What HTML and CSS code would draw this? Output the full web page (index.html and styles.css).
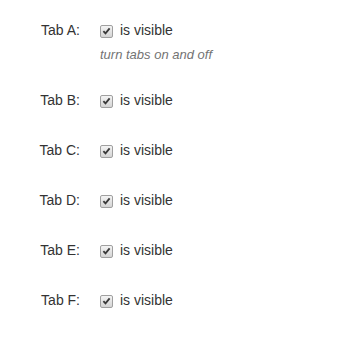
FILE: index.html
```html
<!DOCTYPE html>
<html>
<head>
<meta charset="utf-8">
<link rel="stylesheet" href="styles.css">
</head>
<body>
<form class="form">
  <div class="row">
    <div class="label">Tab A:</div>
    <div class="control">
      <label class="check"><span class="box"><svg viewBox="0 0 12 12" width="12" height="12"><path d="M2.6 6.2 L4.9 8.6 L9.4 3.2" fill="none" stroke="#3a3a3a" stroke-width="2"/></svg></span>is visible</label>
      <div class="help">turn tabs on and off</div>
    </div>
  </div>
  <div class="row">
    <div class="label">Tab B:</div>
    <div class="control">
      <label class="check"><span class="box"><svg viewBox="0 0 12 12" width="12" height="12"><path d="M2.6 6.2 L4.9 8.6 L9.4 3.2" fill="none" stroke="#3a3a3a" stroke-width="2"/></svg></span>is visible</label>
    </div>
  </div>
  <div class="row">
    <div class="label">Tab C:</div>
    <div class="control">
      <label class="check"><span class="box"><svg viewBox="0 0 12 12" width="12" height="12"><path d="M2.6 6.2 L4.9 8.6 L9.4 3.2" fill="none" stroke="#3a3a3a" stroke-width="2"/></svg></span>is visible</label>
    </div>
  </div>
  <div class="row">
    <div class="label">Tab D:</div>
    <div class="control">
      <label class="check"><span class="box"><svg viewBox="0 0 12 12" width="12" height="12"><path d="M2.6 6.2 L4.9 8.6 L9.4 3.2" fill="none" stroke="#3a3a3a" stroke-width="2"/></svg></span>is visible</label>
    </div>
  </div>
  <div class="row">
    <div class="label">Tab E:</div>
    <div class="control">
      <label class="check"><span class="box"><svg viewBox="0 0 12 12" width="12" height="12"><path d="M2.6 6.2 L4.9 8.6 L9.4 3.2" fill="none" stroke="#3a3a3a" stroke-width="2"/></svg></span>is visible</label>
    </div>
  </div>
  <div class="row">
    <div class="label">Tab F:</div>
    <div class="control">
      <label class="check"><span class="box"><svg viewBox="0 0 12 12" width="12" height="12"><path d="M2.6 6.2 L4.9 8.6 L9.4 3.2" fill="none" stroke="#3a3a3a" stroke-width="2"/></svg></span>is visible</label>
    </div>
  </div>
</form>
</body>
</html>
```

FILE: styles.css
```css
html, body {
  margin: 0;
  padding: 0;
  background: #fff;
}
body {
  font-family: "Liberation Sans", Arial, sans-serif;
  font-size: 14px;
  line-height: 20px;
  color: #333;
}
.form {
  padding-top: 20px;
  display: flex;
  flex-direction: column;
  gap: 30px;
}
.row {
  display: grid;
  grid-template-columns: 80px 1fr;
  column-gap: 20px;
}
.label {
  text-align: right;
}
.control {
  display: flex;
  flex-direction: column;
}
.check {
  display: flex;
  align-items: center;
  gap: 7px;
}
.box {
  width: 11px;
  height: 11px;
  border: 1px solid #a0a0a0;
  border-radius: 2px;
  background: linear-gradient(#f4f4f4, #d4d4d4);
  display: flex;
  align-items: center;
  justify-content: center;
  margin-top: 2px;
}
.box svg {
  display: block;
}
.help {
  margin-top: 5px;
  margin-bottom: -5px;
  font-size: 13px;
  font-style: italic;
  color: #737373;
}
```
